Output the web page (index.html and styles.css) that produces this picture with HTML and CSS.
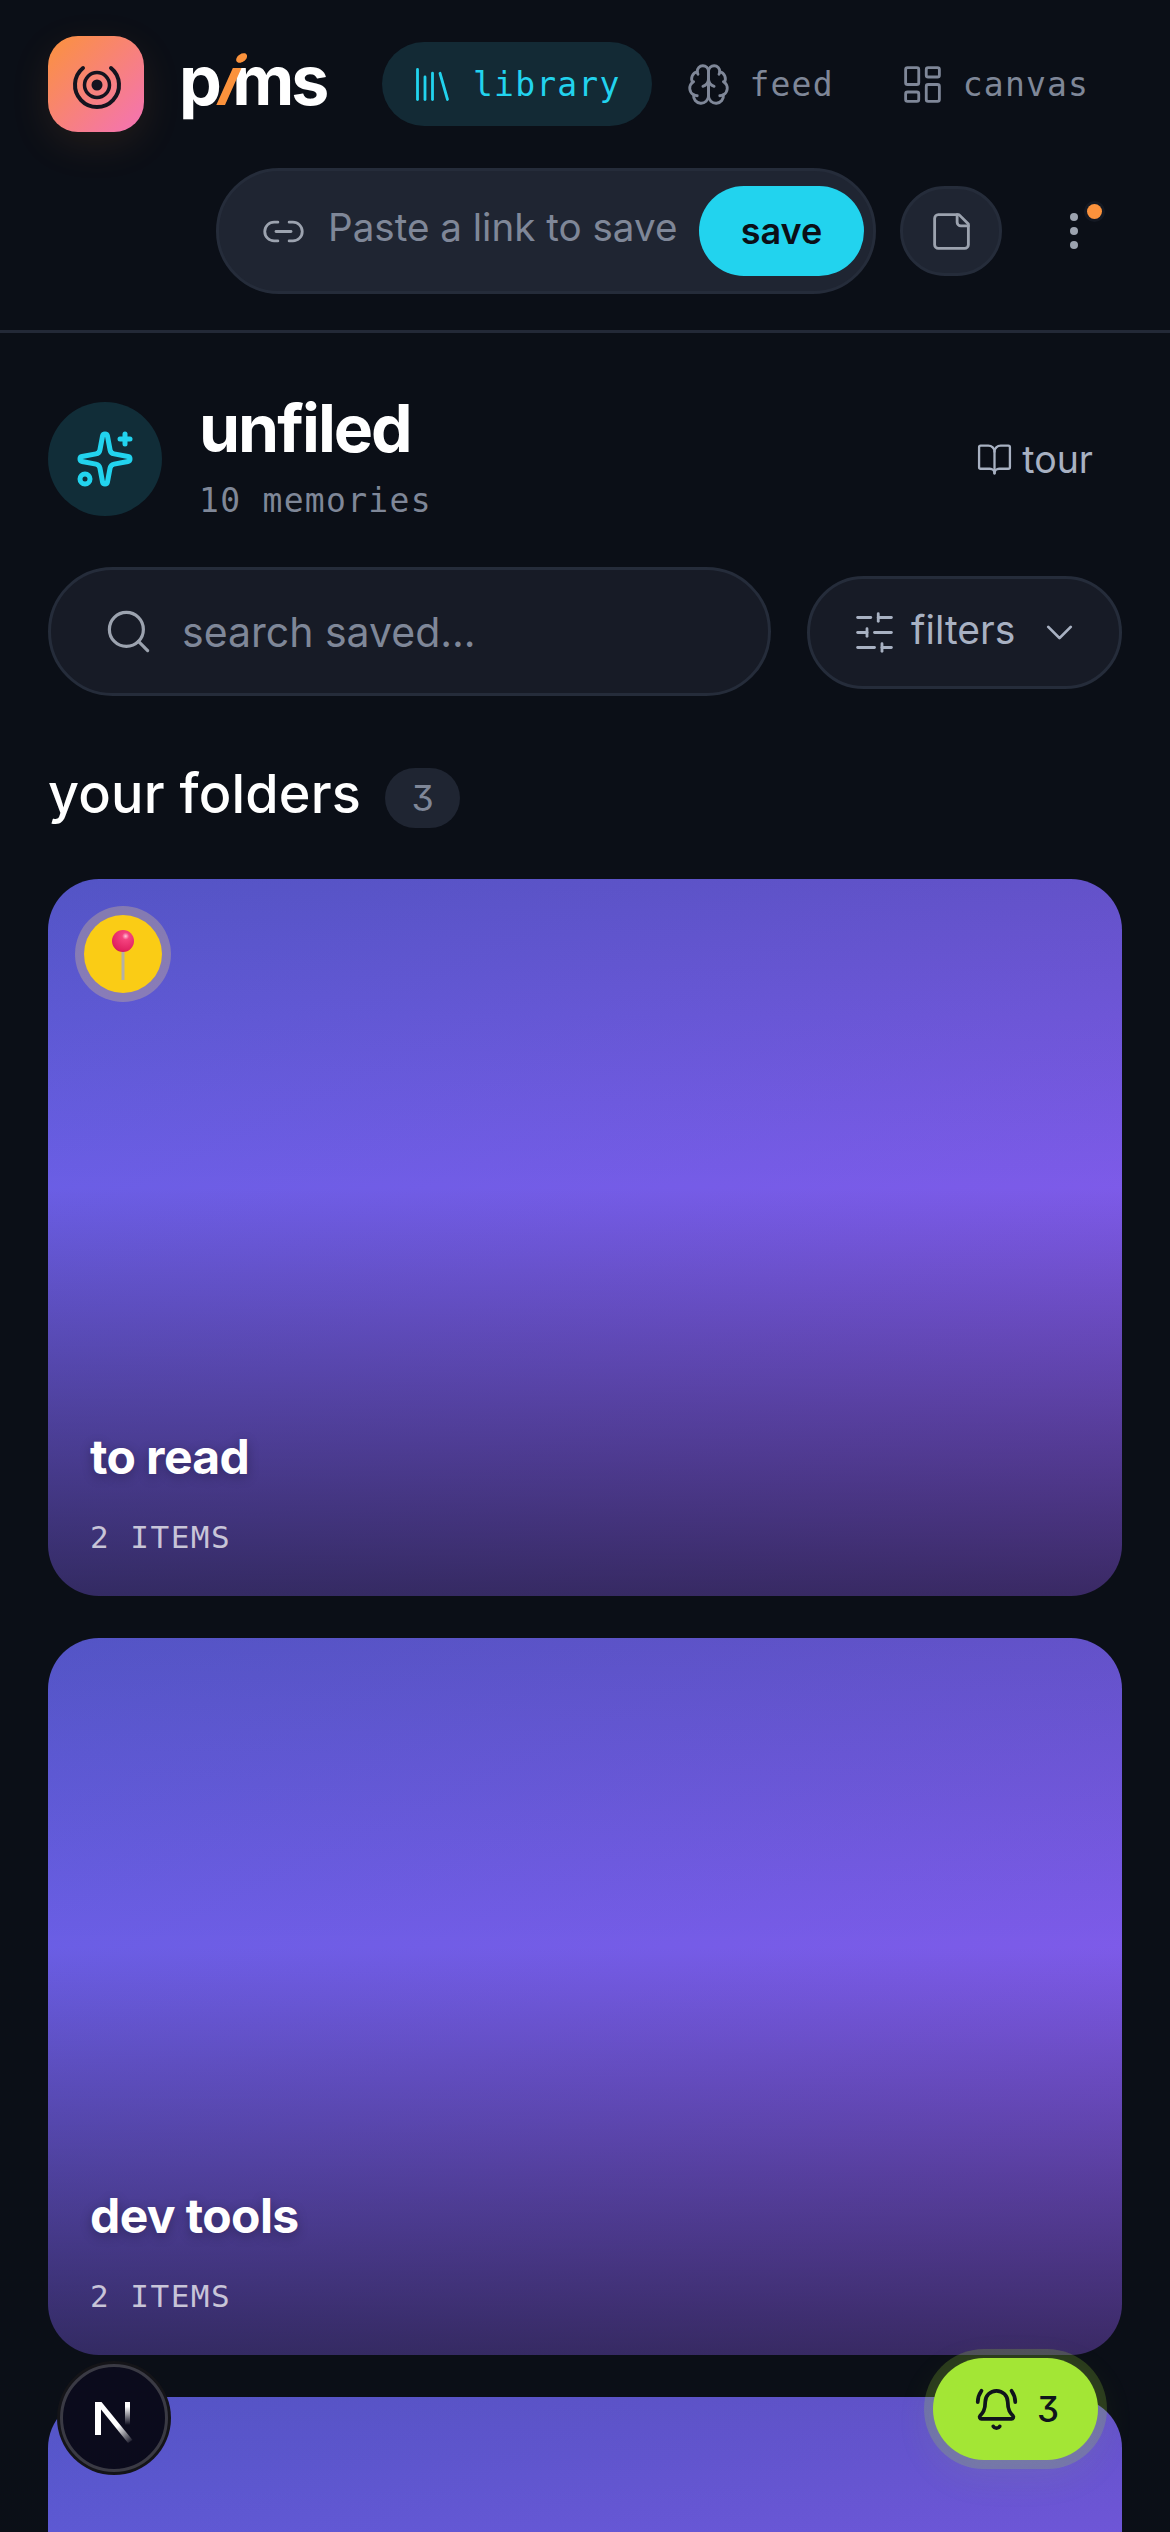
FILE: index.html
```html
<!DOCTYPE html>
<html lang="en">
<head>
<meta charset="utf-8">
<title>pims</title>
<link rel="stylesheet" href="styles.css">
</head>
<body>
<div class="app">
  <header class="header">
    <div class="top-row">
      <div class="logo-tile">
        <svg class="logo-mark" width="60" height="60" viewBox="0 0 60 60" fill="none" stroke="#14141f" stroke-linecap="round">
          <path d="M17 14A22 22 0 1 0 45 14" stroke-width="4"/>
          <circle cx="31" cy="31" r="12.500" stroke-width="3.500"/>
          <circle cx="31" cy="31" r="5.500" fill="#14141f" stroke="none"/>
        </svg>
      </div>
      <div class="wordmark">p<span class="wordmark-i">i</span>ms</div>
      <nav class="nav">
        <a class="nav-item nav-item-active">
          <svg class="icon" viewBox="0 0 24 24"><path d="m16 6 4 14"/><path d="M12 6v14"/><path d="M8 8v12"/><path d="M4 4v16"/></svg>
          <span>library</span>
        </a>
        <a class="nav-item">
          <svg class="icon" viewBox="0 0 24 24"><path d="M12 5a3 3 0 1 0-5.997.125 4 4 0 0 0-2.526 5.77 4 4 0 0 0 .556 6.588A4 4 0 1 0 12 18Z"/><path d="M12 5a3 3 0 1 1 5.997.125 4 4 0 0 1 2.526 5.77 4 4 0 0 1-.556 6.588A4 4 0 1 1 12 18Z"/><path d="M15 13a4.500 4.500 0 0 1-3-4 4.500 4.500 0 0 1-3 4"/><path d="M12 9v9"/><path d="M17.599 6.500a3 3 0 0 0 .399-1.375"/><path d="M6.003 5.125A3 3 0 0 0 6.401 6.500"/><path d="M3.477 10.896a4 4 0 0 1 .585-.396"/><path d="M19.938 10.500a4 4 0 0 1 .585.396"/><path d="M6 18a4 4 0 0 1-1.967-.516"/><path d="M19.967 17.484A4 4 0 0 1 18 18"/></svg>
          <span>feed</span>
        </a>
        <a class="nav-item">
          <svg class="icon" viewBox="0 0 24 24"><rect x="3" y="3" width="7" height="9" rx="1"/><rect x="14" y="3" width="7" height="5" rx="1"/><rect x="14" y="12" width="7" height="9" rx="1"/><rect x="3" y="16" width="7" height="5" rx="1"/></svg>
          <span>canvas</span>
        </a>
      </nav>
    </div>
    <div class="action-row">
      <div class="link-bar">
        <svg class="icon icon-muted" viewBox="0 0 24 24"><path d="M9 17H7A5 5 0 0 1 7 7h2"/><path d="M15 7h2a5 5 0 1 1 0 10h-2"/><path d="M8 12h8"/></svg>
        <span class="link-placeholder">Paste a link to save</span>
        <button class="save-btn">save</button>
      </div>
      <button class="note-btn">
        <svg class="icon icon-muted" viewBox="0 0 24 24"><path d="M16 3H5a2 2 0 0 0-2 2v14a2 2 0 0 0 2 2h14a2 2 0 0 0 2-2V8Z"/><path d="M15 3v4a2 2 0 0 0 2 2h4"/></svg>
      </button>
      <button class="menu-btn">
        <i class="menu-dot"></i><i class="menu-dot"></i><i class="menu-dot"></i>
        <b class="menu-badge"></b>
      </button>
    </div>
  </header>

  <main class="main">
    <section class="title-row">
      <div class="title-icon">
        <svg class="icon-large" viewBox="0 0 24 24"><path d="M11.017 2.814a1 1 0 0 1 1.966 0l1.051 5.558a2 2 0 0 0 1.594 1.594l5.558 1.051a1 1 0 0 1 0 1.966l-5.558 1.051a2 2 0 0 0-1.594 1.594l-1.051 5.558a1 1 0 0 1-1.966 0l-1.051-5.558a2 2 0 0 0-1.594-1.594l-5.558-1.051a1 1 0 0 1 0-1.966l5.558-1.051a2 2 0 0 0 1.594-1.594z"/><path d="M20 2v4"/><path d="M22 4h-4"/><circle cx="4" cy="20" r="2"/></svg>
      </div>
      <div class="title-text">
        <h1 class="title">unfiled</h1>
        <p class="subtitle">10 memories</p>
      </div>
      <a class="tour">
        <svg class="icon-book" viewBox="0 0 24 24"><path d="M12 7v14"/><path d="M3 18a1 1 0 0 1-1-1V4a1 1 0 0 1 1-1h5a4 4 0 0 1 4 4 4 4 0 0 1 4-4h5a1 1 0 0 1 1 1v13a1 1 0 0 1-1 1h-6a3 3 0 0 0-3 3 3 3 0 0 0-3-3z"/></svg>
        <span>tour</span>
      </a>
    </section>

    <section class="search-row">
      <div class="search">
        <svg class="icon-search" viewBox="0 0 24 24"><circle cx="11" cy="11" r="8"/><path d="m21 21-4.300-4.300"/></svg>
        <span class="search-text">search saved...</span>
      </div>
      <button class="filters">
        <svg class="icon icon-soft" viewBox="0 0 24 24"><path d="M21 4h-7"/><path d="M10 4H3"/><path d="M21 12h-9"/><path d="M8 12H3"/><path d="M21 20h-5"/><path d="M12 20H3"/><path d="M14 2v4"/><path d="M8 10v4"/><path d="M16 18v4"/></svg>
        <span class="filters-text">filters</span>
        <svg class="icon icon-soft" viewBox="0 0 24 24"><path d="m6 9 6 6 6-6"/></svg>
      </button>
    </section>

    <section class="folders-head">
      <h2 class="folders-title">your folders</h2>
      <span class="folders-count">3</span>
    </section>

    <section class="cards">
      <article class="card">
        <div class="pin">
          <svg width="36" height="60" viewBox="0 0 36 60">
            <defs>
              <radialGradient id="ball" cx="0.62" cy="0.28" r="0.8">
                <stop offset="0" stop-color="#ffc4d8"/>
                <stop offset="0.2" stop-color="#f5437f"/>
                <stop offset="0.85" stop-color="#e0205f"/>
                <stop offset="1" stop-color="#b81a52"/>
              </radialGradient>
            </defs>
            <rect x="16.500" y="20" width="3" height="36" fill="#b4b0a8"/>
            <circle cx="18" cy="17" r="11" fill="url(#ball)"/>
          </svg>
        </div>
        <h3 class="card-title">to read</h3>
        <p class="card-meta">2 ITEMS</p>
      </article>
      <article class="card">
        <h3 class="card-title">dev tools</h3>
        <p class="card-meta">2 ITEMS</p>
      </article>
      <article class="card"></article>
    </section>
  </main>

  <button class="next-badge">
    <svg width="54" height="54" viewBox="0 0 54 54">
      <defs>
        <linearGradient id="nd" gradientUnits="userSpaceOnUse" x1="8" y1="11" x2="45" y2="52"><stop offset="0.6" stop-color="#fff"/><stop offset="1" stop-color="#fff" stop-opacity="0"/></linearGradient>
        <linearGradient id="nr" gradientUnits="userSpaceOnUse" x1="40" y1="11" x2="40" y2="34"><stop offset="0.2" stop-color="#fff"/><stop offset="1" stop-color="#fff" stop-opacity="0"/></linearGradient>
      </defs>
      <rect x="8" y="11" width="6" height="33" fill="#fff"/>
      <path d="M8 11h6.500l31 38-4.500 3Z" fill="url(#nd)"/>
      <rect x="38" y="11" width="5" height="23" fill="url(#nr)"/>
    </svg>
  </button>
  <button class="bell">
    <svg class="icon icon-dark" viewBox="0 0 24 24"><path d="M10.268 21a2 2 0 0 0 3.464 0"/><path d="M22 8c0-2.300-.8-4.300-2-6"/><path d="M3.262 15.326A1 1 0 0 0 4 17h16a1 1 0 0 0 .74-1.673C19.410 13.956 18 12.499 18 8A6 6 0 0 0 6 8c0 4.499-1.411 5.956-2.738 7.326"/><path d="M4 2C2.800 3.700 2 5.700 2 8"/></svg>
    <span class="bell-count">3</span>
  </button>
</div>
</body>
</html>
```
FILE: styles.css
```css
* { box-sizing: border-box; }
html, body { margin: 0; padding: 0; }
body {
  background: #0b0f17;
  font-family: Inter, "Noto Sans", sans-serif;
  color: #fff;
}
.app {
  position: relative;
  width: 1170px;
  height: 2532px;
  overflow: hidden;
}
button { font: inherit; color: inherit; padding: 0; border: 0; background: none; }
h1, h2, h3, p { margin: 0; }

.icon, .icon-large, .icon-book, .icon-search {
  fill: none;
  stroke: currentColor;
  stroke-linecap: round;
  stroke-linejoin: round;
  flex: none;
}
.icon { width: 45px; height: 45px; stroke-width: 1.5; }
.icon-muted { color: #9ca3af; }
.icon-soft { color: #a8b1c2; }
.icon-dark { color: #0f141c; stroke-width: 2; }

.header {
  padding: 36px 48px 36px;
  border-bottom: 3px solid #232937;
  display: flex;
  flex-direction: column;
  gap: 36px;
}
.top-row { display: flex; align-items: center; height: 96px; }
.logo-tile {
  width: 96px;
  height: 96px;
  border-radius: 30px;
  background: linear-gradient(135deg, #fb923c, #f472b6);
  box-shadow: 0 12px 40px rgba(251, 146, 60, 0.1);
  display: flex;
  align-items: center;
  justify-content: center;
  flex: none;
}
.wordmark {
  margin-left: 35px;
  width: 148px;
  height: 96px;
  padding-bottom: 8px;
  font-size: 68px;
  font-weight: 700;
  letter-spacing: -3.200px;
  line-height: 88px;
  flex: none;
  white-space: nowrap;
}
.wordmark-i {
  display: inline-block;
  color: #fb923c;
  font-weight: 600;
  transform: skewX(-24deg);
  margin: 0 -5px 0 4px;
}
.nav { margin-left: 55px; display: flex; gap: 6px; }
.nav-item {
  display: flex;
  align-items: center;
  gap: 18px;
  height: 84px;
  padding: 0 32px 0 28px;
  border-radius: 42px;
  font-family: "DejaVu Sans Mono", monospace;
  font-size: 33px;
  letter-spacing: 1.200px;
  color: #7f8798;
  white-space: nowrap;
}
.nav-item-active { background: #132a35; color: #22d3ee; }

.action-row {
  display: flex;
  align-items: center;
  height: 126px;
  padding-left: 168px;
}
.link-bar {
  width: 660px;
  height: 126px;
  border: 3px solid #252c3a;
  border-radius: 63px;
  background: #1f2532;
  display: flex;
  align-items: center;
  padding-left: 42px;
}
.link-placeholder {
  margin-left: 22px;
  font-size: 38.600px;
  color: #7f8798;
  white-space: nowrap;
  position: relative;
  top: -4px;
  width: 371px;
}
.save-btn {
  width: 165px;
  height: 90px;
  border-radius: 45px;
  background: #22d3ee;
  color: #0b0f17;
  font-size: 36px;
  font-weight: 600;
  flex: none;
}
.note-btn {
  margin-left: 24px;
  width: 102px;
  height: 90px;
  border-radius: 45px;
  background: #1f2532;
  border: 3px solid #252c3a;
  display: flex;
  align-items: center;
  justify-content: center;
  flex: none;
}
.menu-btn {
  position: relative;
  margin-left: 72px;
  width: 0;
  height: 36px;
  display: flex;
  flex-direction: column;
  align-items: center;
  gap: 6px;
  flex: none;
}
.menu-dot { width: 8px; height: 8px; border-radius: 50%; background: #9ca3af; flex: none; margin: 0 -4px; }
.menu-badge {
  position: absolute;
  left: 12.500px;
  top: -9.500px;
  width: 15px;
  height: 15px;
  border-radius: 50%;
  background: #fb923c;
  box-shadow: 0 0 0 3px #141923;
}

.main { padding: 0 48px; }
.title-row {
  display: flex;
  align-items: center;
  height: 114px;
  margin-top: 69px;
}
.title-icon {
  width: 114px;
  height: 114px;
  border-radius: 50%;
  background: #112d38;
  color: #22d3ee;
  display: flex;
  align-items: center;
  justify-content: center;
  flex: none;
}
.icon-large { width: 60px; height: 60px; stroke-width: 2; }
.title-text { margin-left: 37px; }
.title {
  font-size: 66px;
  font-weight: 700;
  letter-spacing: -2px;
  line-height: 72px;
  margin-top: -3px;
}
.subtitle {
  font-family: "DejaVu Sans Mono", monospace;
  font-size: 33px;
  letter-spacing: 1.300px;
  color: #7f8798;
  line-height: 44px;
  margin-top: 15px;
}
.tour {
  margin-left: auto;
  margin-right: 29px;
  display: flex;
  align-items: center;
  gap: 9px;
  color: #a8b1c2;
  font-size: 37.500px;
}
.icon-book { width: 37px; height: 37px; stroke-width: 1.5; }

.search-row {
  display: flex;
  align-items: center;
  gap: 36px;
  margin-top: 51px;
}
.search {
  width: 723px;
  height: 129px;
  border: 3px solid #252c3a;
  border-radius: 65px;
  background: #171b26;
  display: flex;
  align-items: center;
  padding-left: 52px;
  flex: none;
}
.icon-search { width: 51px; height: 51px; stroke-width: 1.500; color: #9ca3af; }
.search-text {
  margin-left: 28px;
  font-size: 41px;
  color: #7f8798;
  white-space: nowrap;
}
.filters {
  width: 315px;
  height: 113px;
  border: 3px solid #252c3a;
  border-radius: 57px;
  background: #171b26;
  display: flex;
  align-items: center;
  padding-left: 42px;
  flex: none;
  margin-top: 1px;
}
.filters-text {
  margin-left: 14px;
  margin-right: 20px;
  font-size: 39px;
  color: #a8b1c2;
  position: relative;
  top: -3px;
  width: 106px;
  text-align: left;
}

.folders-head {
  display: flex;
  align-items: center;
  gap: 24px;
  margin-top: 72px;
  height: 60px;
}
.folders-title {
  font-size: 54px;
  font-weight: 550;
  line-height: 60px;
  letter-spacing: 0.200px;
  white-space: nowrap;
  padding-bottom: 9px;
}
.folders-count {
  width: 75px;
  height: 60px;
  border-radius: 30px;
  background: #1f2532;
  color: #7f8798;
  font-size: 36px;
  font-feature-settings: "cv09";
  display: flex;
  align-items: center;
  justify-content: center;
}

.cards {
  display: flex;
  flex-direction: column;
  gap: 42px;
  margin-top: 51px;
}
.card {
  position: relative;
  height: 717px;
  flex: none;
  border-radius: 51px;
  background:
    linear-gradient(to bottom, rgba(11, 15, 23, 0.14) 0, rgba(11, 15, 23, 0) 43%, rgba(11, 15, 23, 0.64) 100%),
    linear-gradient(155deg, rgb(95, 96, 226), rgb(140, 88, 236));
  display: flex;
  flex-direction: column;
  justify-content: flex-end;
  padding: 0 42px 39px;
}
.pin {
  position: absolute;
  left: 36px;
  top: 36px;
  width: 78px;
  height: 78px;
  border-radius: 50%;
  background: #facc15;
  box-shadow: 0 0 0 9px rgba(250, 220, 120, 0.28);
  display: flex;
  align-items: center;
  justify-content: center;
}
.card-title {
  font-size: 48px;
  font-weight: 700;
  letter-spacing: -0.600px;
  line-height: 58px;
  text-shadow: 0 3px 12px rgba(0, 0, 0, 0.3);
}
.card-meta {
  margin-top: 31px;
  font-family: "DejaVu Sans Mono", monospace;
  font-size: 31px;
  letter-spacing: 1.500px;
  line-height: 40px;
  color: rgba(255, 255, 255, 0.72);
}

.next-badge {
  position: absolute;
  left: 60px;
  top: 2364px;
  width: 108px;
  height: 108px;
  border-radius: 50%;
  background: #0b0b1c;
  border: 3px solid #3a3a44;
  box-shadow: 0 0 0 3px #141418;
  display: flex;
  align-items: center;
  justify-content: center;
}
.bell {
  position: absolute;
  left: 933px;
  top: 2358px;
  width: 165px;
  height: 102px;
  border-radius: 51px;
  background: #a3e635;
  box-shadow: 0 0 0 9px rgba(163, 230, 53, 0.2), 0 12px 40px rgba(163, 230, 53, 0.1);
  display: flex;
  align-items: center;
  padding-left: 41px;
  gap: 18px;
  color: #0f141c;
}
.bell-count { font-size: 35px; font-weight: 500; font-feature-settings: "cv09"; }
```
